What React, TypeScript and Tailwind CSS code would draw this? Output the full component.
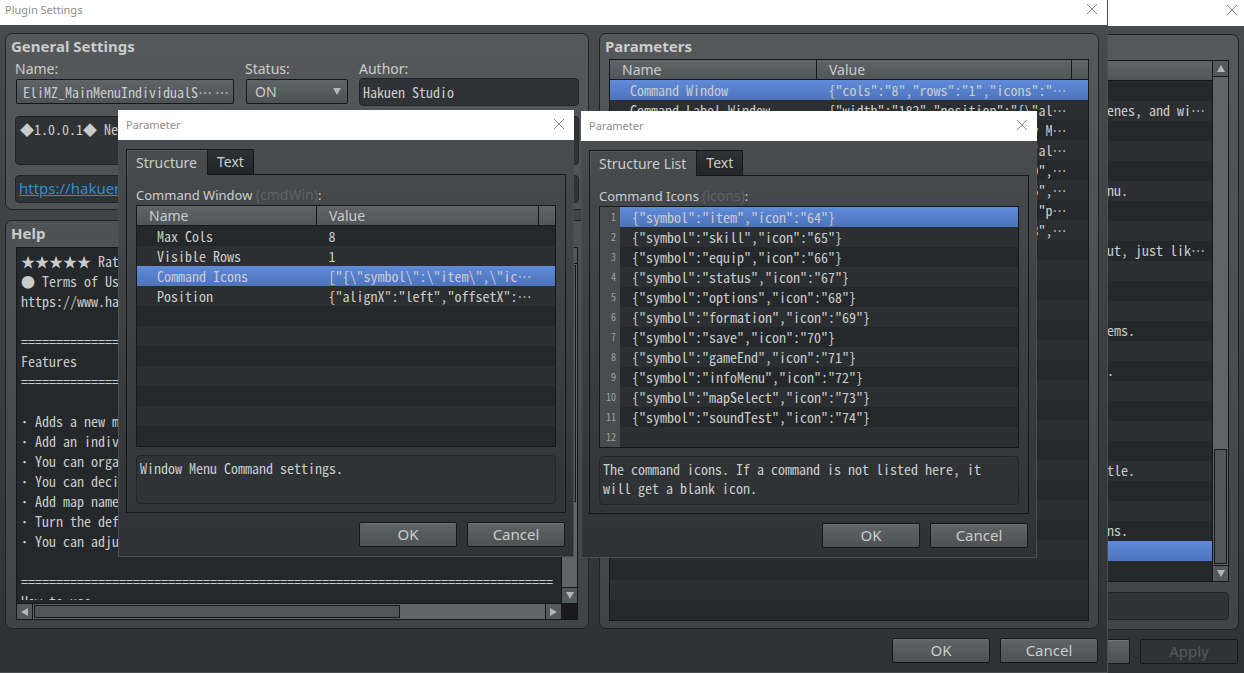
import type { ReactNode } from "react";

const MONO = "font-['Noto_Sans_Mono_CJK_JP','Noto_Sans_CJK_JP',monospace] text-[14px]";

const parameters = [
  { name: "Command Window", value: '{"cols":"8","rows":"1","icons":"…' },
  { name: "Command Label Window", value: '{"width":"182","position":"{\\"al…' },
  { name: "Map Name Window", value: '{"show":"true","prefix":"Party M…' },
  { name: "Gold Window", value: '{"width":"240","position":"{\\"al…' },
  { name: "Playtime Window", value: '{"width":"240","iconIndex":"20",…' },
  { name: "Info Window", value: '{"width":"240","iconIndex":"16",…' },
  { name: "Status Window", value: '{"show":"true","width":"1080","p…' },
  { name: "Actor Window", value: '{"width":"808","maxColumns":"8",…' },
];

const commandWindow = [
  { name: "Max Cols", value: "8" },
  { name: "Visible Rows", value: "1" },
  { name: "Command Icons", value: '["{\\"symbol\\":\\"item\\",\\"ic…' },
  { name: "Position", value: '{"alignX":"left","offsetX":…' },
];

const commandIcons = [
  "item",
  "skill",
  "equip",
  "status",
  "options",
  "formation",
  "save",
  "gameEnd",
  "infoMenu",
  "mapSelect",
  "soundTest",
];

const line = "=".repeat(76);

const helpText = `★★★★★ Rate the plugin! Please, is very important to me ^^
● Terms of Use
https://www.hakuenstudio.com/terms-of-use-5-0-0

${line}
Features
${line}

\uFF65 Adds a new menu layout.
\uFF65 Add an individual window for each actor.
\uFF65 You can organize the windows.
\uFF65 You can decide the size of each window.
\uFF65 Add map name and info windows.
\uFF65 Turn the default windows on or off.
\uFF65 You can adjust the position.

${line}
How to use
${line}`;

// what the plugin manager shows beside the settings window, keyed by row
const managerRows: Record<number, string> = {
  1: "enes, and wi…",
  5: "nu.",
  8: "ut, just lik…",
  12: "ems.",
  14: ".",
  19: "tle.",
  22: "ns.",
};

// the ellipsis gets its own box so that it keeps the centred CJK form
const Clipped = ({ text = "" }: { text?: string }) =>
  text.endsWith("…") ? (
    <>
      {text.slice(0, -1)}
      <span lang="ja" className="inline-block">
        …
      </span>
    </>
  ) : (
    <>{text}</>
  );

const Arrow = ({ dir }: { dir: "up" | "down" | "left" | "right" }) => {
  const points = {
    up: "4,0 8,7 0,7",
    down: "0,0 8,0 4,7",
    left: "7,0 7,8 0,4",
    right: "0,0 7,4 0,8",
  };
  return (
    <svg width="8" height="8" viewBox="0 0 8 8" className="fill-[#b4b6b7]">
      <polygon points={points[dir]} />
    </svg>
  );
};

const ScrollButton = ({ dir }: { dir: "up" | "down" | "left" | "right" }) => (
  <button
    aria-label={`Scroll ${dir}`}
    className="flex size-[15px] shrink-0 items-center justify-center bg-[#54595b]"
  >
    <Arrow dir={dir} />
  </button>
);

const TitleBar = ({ title, className }: { title?: string; className: string }) => (
  <div
    className={`flex shrink-0 items-start justify-between bg-white pr-2 font-['Noto_Sans',sans-serif] text-[11px] leading-4 text-[#8e8e8e] ${className}`}
  >
    <span>{title}</span>
    <button aria-label="Close" className="ml-auto">
      <svg width="14" height="14" viewBox="0 0 14 14" className="stroke-[#8a8a8a]" fill="none">
        <path d="M2 2 L12 12 M12 2 L2 12" />
      </svg>
    </button>
  </div>
);

const Button = ({ children }: { children?: ReactNode }) => (
  <button className="h-[25px] w-[98px] rounded-xs border border-[#14181b] bg-linear-to-b from-[#5f6466] to-[#4d5254] text-[15px] leading-none inset-shadow-[0_1px_0_#6b7072]">
    {children}
  </button>
);

const Panel = ({ title, className, children }: { title: string; className: string; children: ReactNode }) => (
  <section className={`flex flex-col rounded-[7px] border border-[#1f2325] bg-white/8 ${className}`}>
    <h2 className="pl-[5px] text-[15px] font-bold leading-[25px]">{title}</h2>
    {children}
  </section>
);

const ParamTable = ({
  items,
  total,
  selected,
  nameWidth,
}: {
  items: { name: string; value: string }[];
  total: number;
  selected: number;
  nameWidth: string;
}) => (
  <table className="w-full table-fixed border-collapse border border-[#14181b] bg-[#24282a] text-left">
    <colgroup>
      <col className={nameWidth} />
      <col />
      <col className="w-[17px]" />
    </colgroup>
    <thead>
      <tr className="h-5 bg-linear-to-b from-[#5f6466] to-[#505557] text-[14px] leading-[18px]">
        <th className="border border-[#14181b] pl-3 pt-px font-normal">Name</th>
        <th className="border border-[#14181b] pl-3 pt-px font-normal">Value</th>
        <th className="border border-[#14181b]" />
      </tr>
    </thead>
    <tbody className={`${MONO} leading-5`}>
      {Array.from({ length: total }, (_, i) => (
        <tr
          key={i}
          className={
            i === selected
              ? "h-5 bg-linear-to-b from-[#5f8bda] to-[#4d73ba]"
              : "h-5 even:bg-[#2b2f31]"
          }
        >
          <td className="overflow-hidden whitespace-nowrap pl-5">{items[i]?.name}</td>
          <td colSpan={2} className="overflow-hidden whitespace-nowrap pl-3">
            <Clipped text={items[i]?.value} />
          </td>
        </tr>
      ))}
    </tbody>
  </table>
);

const Dialog = ({
  tab,
  label,
  hint,
  description,
  className,
  children,
}: {
  tab: string;
  label: string;
  hint: string;
  description: string;
  className: string;
  children: ReactNode;
}) => (
  <div role="dialog" aria-label="Parameter" className={`absolute w-[456px] ${className}`}>
    <TitleBar title="Parameter" className="h-[30px] pl-2 pt-[7px]" />
    <div className="border border-t-0 border-[#4a4e50] bg-linear-to-b from-[#494c4e] to-[#2f3234] px-[7px] pb-[9px] pt-[9px]">
      <div role="tablist" className="flex text-[14px] leading-6">
        <button
          role="tab"
          aria-selected="true"
          className="h-[26px] border border-b-0 border-[#14181b] pl-[9px] pr-[10px] inset-shadow-[1px_1px_0_#56595b]"
        >
          {tab}
        </button>
        <button
          role="tab"
          aria-selected="false"
          className="h-[26px] border border-l-0 border-[#14181b] bg-linear-to-b from-[#2e3234] to-[#212527] px-[9px]"
        >
          Text
        </button>
        <div className="flex-1 border-b border-[#14181b]" />
      </div>
      <div className="border border-t-0 border-[#14181b] px-[9px] pb-2 pt-[10px]">
        <p className="h-5 text-[13px] leading-5">
          {label} <span className="text-[14px] text-[#5e6264]">({hint})</span>:
        </p>
        {children}
        <p
          className={`${MONO} mt-2 h-[49px] rounded border border-[#212527] bg-[#2f3335] px-[3px] py-[3px] leading-[19px]`}
        >
          {description}
        </p>
      </div>
      <div className="mr-px mt-[9px] flex justify-end gap-[10px]">
        <Button>OK</Button>
        <Button>Cancel</Button>
      </div>
    </div>
  </div>
);

const PluginManager = () => (
  <div className="absolute inset-y-0 left-[1100px] right-0 flex flex-col bg-linear-to-b from-[#494c4e] to-[#2f3234]">
    <TitleBar className="h-[26px] pr-[5px] pt-[3px]" />
    <div className="mr-[5px] mt-2 flex h-[596px] flex-col rounded-r-[7px] border border-l-0 border-[#1f2325] bg-white/8 pr-[9px] pt-[25px]">
      <div className="flex h-[522px] border border-l-0 border-[#14181b]">
        <div className="min-w-0 flex-1 border-r border-[#14181b] bg-[#24282a]">
          <div className="h-5 border-b border-[#14181b] bg-linear-to-b from-[#5f6466] to-[#505557]" />
          <ul className={`${MONO} leading-[19px]`}>
            {Array.from({ length: 25 }, (_, i) => (
              <li
                key={i}
                className={
                  i === 23
                    ? "h-5 bg-linear-to-b from-[#5f8bda] to-[#4d73ba]"
                    : "h-5 whitespace-nowrap pl-[7px] even:bg-[#2b2f31]"
                }
              >
                <Clipped text={managerRows[i]} />
              </li>
            ))}
          </ul>
        </div>
        <div className="flex w-[15px] flex-col bg-[#5f6466]">
          <ScrollButton dir="up" />
          <div className="flex flex-1 flex-col justify-end border-y border-[#14181b] p-px">
            <div className="h-[115px] border border-[#14181b] bg-[#505557]" />
          </div>
          <ScrollButton dir="down" />
        </div>
      </div>
      <div className="mt-[10px] h-7 rounded border border-[#212527] bg-[#2f3335]" />
    </div>
    <div className="mr-[6px] mt-[9px] flex justify-end gap-[10px]">
      <Button />
      <button
        disabled
        className="h-[25px] w-[98px] shrink-0 rounded-xs border border-[#14181b] text-[15px] leading-none text-[#56595b]"
      >
        Apply
      </button>
    </div>
  </div>
);

const PluginSettings = () => (
  <div className="absolute inset-y-0 left-0 flex w-[1108px] flex-col border-b border-r border-[#4a4e50] bg-linear-to-b from-[#494c4e] to-[#2f3234]">
    <TitleBar title="Plugin Settings" className="h-[25px] pl-[5px] pt-[2px]" />
    <div className="flex gap-[10px] pl-[5px] pr-2 pt-2">
      <div className="flex w-[584px] flex-col gap-[10px]">
        <Panel title="General Settings" className="h-[177px]">
          <div className="flex flex-col gap-[10px] px-[9px]">
            <div className="flex gap-[11px] text-[14px] leading-5">
              <div className="flex w-[219px] flex-col">
                <label htmlFor="name">Name:</label>
                <button
                  id="name"
                  className={`${MONO} ml-px flex h-[25px] items-center gap-[3px] rounded-xs border border-[#14181b] bg-linear-to-b from-[#5f6466] to-[#4d5254] pl-[6px]`}
                >
                  <span>
                    <Clipped text="EliMZ_MainMenuIndividualS…" />
                  </span>
                  <Clipped text="…" />
                </button>
              </div>
              <div className="flex w-[103px] flex-col">
                <label htmlFor="status">Status:</label>
                <div className="relative pl-px">
                  <select
                    id="status"
                    className="h-[25px] w-full appearance-none rounded-xs border border-[#14181b] bg-linear-to-b from-[#5f6466] to-[#4d5254] pl-2"
                  >
                    <option>ON</option>
                    <option>OFF</option>
                  </select>
                  <span className="pointer-events-none absolute right-[7px] top-[9px]">
                    <Arrow dir="down" />
                  </span>
                </div>
              </div>
              <div className="flex flex-1 flex-col">
                <label htmlFor="author" className="leading-[19px]">
                  Author:
                </label>
                <input
                  id="author"
                  defaultValue="Hakuen Studio"
                  className={`${MONO} h-7 rounded border border-[#212527] bg-[#2f3335] px-[3px] pb-px`}
                />
              </div>
            </div>
            <p className={`${MONO} h-[49px] rounded border border-[#212527] bg-[#2f3335] px-1 py-[3px] leading-[19px]`}>
              ◆1.0.0.1◆ New parameters
            </p>
            <p className="h-7 rounded border border-[#212527] bg-[#2f3335] px-[3px] text-[15px] leading-6">
              <a href="https://hakuenstudio.itch.io/" className="text-[#2b8fd6] underline">
                https://hakuenstudio.itch.io/
              </a>
            </p>
          </div>
        </Panel>
        <Panel title="Help" className="h-[409px]">
          <div className="mx-[10px] mt-px flex h-[373px] flex-col border border-[#14181b]">
            <div className="flex min-h-0 flex-1 border-b border-[#14181b]">
              <div className="min-w-0 flex-1 border-r border-[#14181b] bg-[#24282a] pb-[3px]">
                <textarea
                  readOnly
                  aria-label="Help"
                  wrap="off"
                  value={helpText}
                  className={`${MONO} block h-full w-full resize-none overflow-hidden px-1 pt-[3px] leading-5 outline-none`}
                />
              </div>
              <div className="flex w-[15px] flex-col bg-[#5f6466]">
                <ScrollButton dir="up" />
                <div className="flex-1 border-y border-[#14181b] p-px">
                  <div className="h-[237px] border border-[#14181b] bg-[#505557]" />
                </div>
                <ScrollButton dir="down" />
              </div>
            </div>
            <div className="flex h-[15px]">
              <ScrollButton dir="left" />
              <div className="flex-1 border-x border-[#14181b] bg-[#5f6466] p-px">
                <div className="h-full w-[366px] border border-[#14181b] bg-[#505557]" />
              </div>
              <ScrollButton dir="right" />
              <div className="w-4 bg-[#1a191b]" />
            </div>
          </div>
        </Panel>
      </div>
      <Panel title="Parameters" className="min-w-0 flex-1">
        <div className="px-[9px]">
          <ParamTable items={parameters} total={27} selected={0} nameWidth="w-[207px]" />
        </div>
      </Panel>
    </div>
    <div className="mr-[9px] mt-[9px] flex justify-end gap-[10px]">
      <Button>OK</Button>
      <Button>Cancel</Button>
    </div>
  </div>
);

const App = () => {
  return (
    <div className="relative h-screen min-h-[673px] overflow-hidden bg-[#2f3234] font-['Noto_Sans',sans-serif] text-[#cacccc]">
      <PluginManager />
      <PluginSettings />
      <Dialog
        tab="Structure"
        label="Command Window"
        hint="cmdWin"
        description="Window Menu Command settings."
        className="left-[118px] top-[110px]"
      >
        <ParamTable items={commandWindow} total={11} selected={2} nameWidth="w-[180px]" />
      </Dialog>
      <Dialog
        tab="Structure List"
        label="Command Icons"
        hint="icons"
        description="The command icons. If a command is not listed here, it will get a blank icon."
        className="left-[581px] top-[111px]"
      >
        <ol className={`${MONO} border border-[#14181b] bg-[#24282a] leading-5`}>
          {Array.from({ length: 12 }, (_, i) => (
            <li key={i} className="group flex h-5">
              <span className="w-5 bg-[#484c4e] pr-1 text-right text-[10px] text-[#a0a3a4]">{i + 1}</span>
              <span
                className={
                  i === 0
                    ? "flex-1 bg-linear-to-b from-[#5f8bda] to-[#4d73ba] pl-3"
                    : "flex-1 pl-3 group-even:bg-[#2b2f31]"
                }
              >
                {commandIcons[i] && `{"symbol":"${commandIcons[i]}","icon":"${64 + i}"}`}
              </span>
            </li>
          ))}
        </ol>
      </Dialog>
    </div>
  );
};

export default App;
